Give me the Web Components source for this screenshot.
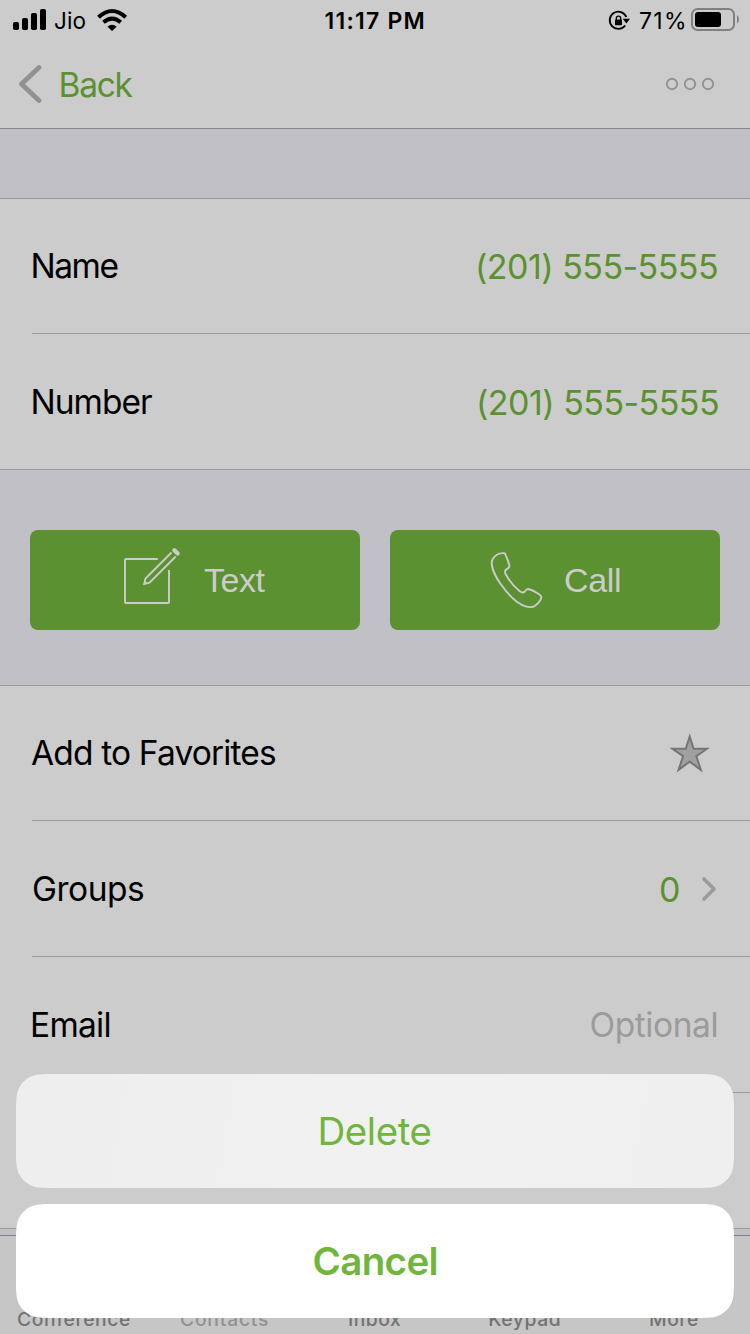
<!DOCTYPE html>
<html lang="en">
<head>
<meta charset="utf-8">
<title>Contact</title>
<style>
html,body{margin:0;padding:0;background:#ccc}
body{font-family:Inter,"Liberation Sans",sans-serif;color:#000;width:750px;height:1334px;overflow:hidden}
</style>
</head>
<body>
<contact-screen></contact-screen>
<script>
const define=(name,html,setup)=>customElements.define(name,class extends HTMLElement{
  constructor(){super();this.attachShadow({mode:'open'}).innerHTML=html;}
  connectedCallback(){if(setup)setup(this,this.shadowRoot);}
});
const ctx=document.createElement('canvas').getContext('2d');

// Text whose box is as wide as its visible glyphs; tracking is spread to reach the width.
define('fit-text','<style>:host{display:block;flex:none;white-space:nowrap;line-height:1.2}span{display:block}</style><span><slot></slot></span>',(el,root)=>{
  const size=+el.getAttribute('size'),w=+el.getAttribute('w'),weight=el.getAttribute('weight')||400;
  const family=el.getAttribute('family')||'Inter',t=el.textContent;
  ctx.font=`${weight} ${size}px "${family}"`;
  const m=ctx.measureText(t),ink=m.actualBoundingBoxLeft+m.actualBoundingBoxRight;
  const ls=t.length>1?(w-ink)/(t.length-1):0;
  el.style.cssText+=`;width:${w}px;font:${weight} ${size}px/1.2 "${family}",sans-serif;color:${el.getAttribute('color')||'inherit'}`;
  const s=root.querySelector('span');
  s.style.letterSpacing=ls+'px';s.style.marginLeft=m.actualBoundingBoxLeft+'px';
});

define('status-bar',`<style>
:host{display:flex;height:41px;align-items:center;justify-content:space-between}
div{display:flex;align-items:center}svg{display:block;flex:none}
.l{padding-left:13px;width:325px;box-sizing:border-box}.r{width:326px;justify-content:flex-end;padding-right:10px;box-sizing:border-box}
</style>
<div class="l"><svg width="33" height="41"><rect x="0" y="22" width="6" height="8" rx="1.8"/><rect x="9" y="18" width="6" height="12" rx="1.8"/><rect x="18" y="13" width="6" height="17" rx="1.8"/><rect x="27" y="9" width="6" height="21" rx="1.8"/></svg>
<fit-text size="22.5" w="30.5" style="margin-left:9px">Jio</fit-text>
<svg width="32" height="41" style="margin-left:10px" viewBox="95.500 0 32 41"><g fill="none" stroke="#000" stroke-width="4"><path d="M98 17.2Q111.6 4.8 125.200 17.2"/><path d="M103 22.300Q111.600 14.800 120.200 22.300"/></g><path d="M107 26.700Q111.600 22.600 116.200 26.700L111.600 31z"/></svg></div>
<fit-text size="23" w="98" weight="600" style="margin-top:2px">11:17 PM</fit-text>
<div class="r"><svg width="22" height="41" viewBox="608 0 22 41"><path d="M626.300 17A8.600 8.600 0 1 0 625.200 25.500" fill="none" stroke="#000" stroke-width="1.900"/><path d="M622.800 18.800h7.200l-3.600 4.700z"/><rect x="615" y="19.600" width="7" height="5.700" rx=".8"/><path d="M616.300 20v-1.600a2.200 2.200 0 0 1 4.400 0V20" fill="none" stroke="#000" stroke-width="1.300"/></svg>
<fit-text size="23" w="44" style="margin-left:10px;margin-right:1px;margin-top:2px">71%</fit-text>
<svg width="49" height="41" style="margin-left:6px" viewBox="691 0 49 41"><rect x="692" y="9" width="42" height="21" rx="5.500" fill="none" stroke="#808080" stroke-width="2"/><rect x="695" y="12" width="26" height="15" rx="3"/><path d="M737 15v8.500q1.900-1 1.900-4.250t-1.900-4.250z" fill="#808080"/></svg></div>`);

define('nav-bar',`<style>
:host{display:flex;height:87px;align-items:center;border-bottom:1px solid #87868b;padding-left:18px;padding-right:35px}
svg{display:block;margin-bottom:2px}.sp{flex:1}</style>
<svg width="24" height="40" viewBox="0 0 24 40"><path d="M21 3.500L3.500 20 21 36.500" fill="none" stroke="#919191" stroke-width="4.800" stroke-linecap="round" stroke-linejoin="round"/></svg>
<fit-text size="33.500" w="72" color="#5b9130" style="margin-left:18.500px;margin-top:1px">Back</fit-text><div class="sp"></div>
<svg width="50" height="14" viewBox="0 0 50 14"><g fill="none" stroke="#919191" stroke-width="1.900"><circle cx="7" cy="7" r="5.200"/><circle cx="25" cy="7" r="5.200"/><circle cx="43" cy="7" r="5.200"/></g></svg>`);

define('list-row',`<style>
:host{display:block;height:136px;padding-left:32px}
:host([first]),:host([last]){height:135px}
.row{display:flex;align-items:center;justify-content:space-between;height:100%;box-sizing:border-box}
:host(:not([first])) .row{padding-top:2px}
.end{display:flex;align-items:center;padding-right:32px}
:host(:not([last])) .row{border-bottom:1px solid #9b9b9d}
</style><div class="row"><slot></slot><div class="end"><slot name="value"></slot></div></div>`);

define('list-group',`<style>:host{display:block;border-top:1px solid #9b9b9d;border-bottom:1px solid #9b9b9d;background:#ccc}</style><slot></slot>`);

define('action-button',`<style>:host{display:flex;align-items:center;box-sizing:border-box;width:330px;height:100px;border-radius:8px;background:#5b9130;color:#ccc}</style><slot></slot>`);

define('edit-icon',`<style>:host,svg{display:block}</style><svg width="58" height="60" viewBox="123 546 58 60" fill="none" stroke="#ccc" stroke-width="1.900"><path d="M157.800 559H126Q125 559 125 560V602Q125 603 126 603H168Q169 603 169 602V570"/><path d="M171.500 552.500L145.500 578.500L144.200 584L149.500 582.700L175.700 556.500"/><path d="M144 584.500l.8-3.800 3 3z" fill="#ccc" stroke="none"/><path d="M174.300 550.200L177.700 553.600" stroke-width="4.200" stroke-linecap="round"/></svg>`);
define('phone-icon',`<style>:host,svg{display:block}</style><svg width="56" height="60" viewBox="489 550 56 60" fill="none" stroke="#ccc" stroke-width="1.900" stroke-linejoin="round"><path d="M504.500 553.200Q497 552.500 492.700 559C490.300 563 492.400 572 500 583C509 596 518 604.500 526.500 606.700C531 607.900 534.500 607 537.800 603.300C540.500 600.500 541.300 598.800 541.300 597.200C541.300 595.800 539.500 594.600 537.500 593.300C534 591 530 589.400 528.300 589C526.500 588.800 526 590.300 524.800 591.500C523.500 592.800 521.500 592.600 519.500 591C514 586.700 508.300 579 505.600 574C504.400 571.600 505.100 570.200 506.700 569.100C508.500 568.100 509.800 567.700 509.300 565.500C508.600 562 506.800 557.500 505.700 555.100Q505.100 553.600 504.500 553.200Z"/></svg>`);
define('star-icon',`<style>:host{display:block;margin-right:8px}svg{display:block}</style><svg width="40" height="40" viewBox="0 0 40 40"><path d="M19.700 3.600L23.600 15.700H37L26.300 23.100L30.800 36.800L19.700 28.600L8.600 36.800L13.100 23.100L2.400 15.700H15.800Z" fill="#a0a0a0" stroke="#757575" stroke-width="2"/></svg>`);
define('chevron-icon',`<style>:host{display:block;margin-left:22px;margin-right:1px}svg{display:block}</style><svg width="16" height="26" viewBox="0 0 16 26"><path d="M3 3L13 13L3 23" fill="none" stroke="#9b9b9b" stroke-width="3.700" stroke-linecap="round" stroke-linejoin="round"/></svg>`);

// Sheet button with continuous-curvature corners.
define('sheet-button',`<style>:host{display:flex;align-items:center;justify-content:center;height:114px;color:#70b63c;background:#fff}:host([translucent]){background:linear-gradient(100deg,#eee 0,#efefef 22%,#f1f1f1 50%,#f0f0f0 75%,#efefef)}</style><slot></slot>`,el=>{
  const r=26,w=718,h=114,a=1.528665*r,b=1.088493*r,c=.868407*r,d=.631494*r,e=.074911*r,f=.372824*r,g=.16906*r;
  el.style.clipPath=`path("M${a} 0H${w-a}C${w-b} 0 ${w-c} 0 ${w-d} ${e}C${w-f} ${g} ${w-g} ${f} ${w-e} ${d}C${w} ${c} ${w} ${b} ${w} ${a}V${h-a}C${w} ${h-b} ${w} ${h-c} ${w-e} ${h-d}C${w-g} ${h-f} ${w-f} ${h-g} ${w-d} ${h-e}C${w-c} ${h} ${w-b} ${h} ${w-a} ${h}H${a}C${b} ${h} ${c} ${h} ${d} ${h-e}C${f} ${h-g} ${g} ${h-f} ${e} ${h-d}C0 ${h-c} 0 ${h-b} 0 ${h-a}V${a}C0 ${b} 0 ${c} ${e} ${d}C${g} ${f} ${f} ${g} ${d} ${e}C${c} 0 ${b} 0 ${a} 0Z")`;
});
define('action-sheet',`<style>:host{position:absolute;left:16px;right:16px;bottom:16px;display:flex;flex-direction:column;gap:16px}</style><slot></slot>`);

define('tab-bar',`<style>:host{display:grid;grid-template-columns:repeat(5,150px);justify-items:center;align-items:end;box-sizing:border-box;height:99px;border-top:1px solid #808085;background:#c6c6c6;color:#737373;padding-bottom:3px}</style>
<fit-text size="19.300" w="112" weight="500" style="margin-right:2px">Conference</fit-text><fit-text size="19.300" w="87" weight="500" color="#929292" style="margin-right:1px">Contacts</fit-text><fit-text size="19.300" w="52" weight="500">Inbox</fit-text><fit-text size="19.300" w="70.500" weight="500" style="margin-right:1px">Keypad</fit-text><fit-text size="19.300" w="48" weight="500" style="margin-right:2px">More</fit-text>`);

define('contact-screen',`<style>
:host{display:flex;flex-direction:column;position:relative;width:750px;height:1334px;background:#c1c0c6;overflow:hidden}
status-bar,nav-bar{background:#ccc}nav-bar{flex:none}
.gap{height:69px}.actions{display:flex;gap:30px;padding:60px 30px 55px}.foot{height:6px}
</style>
<status-bar></status-bar><nav-bar></nav-bar><div class="gap"></div>
<list-group>
<list-row first><fit-text size="33.500" w="85" style="margin-left:.5px">Name</fit-text><fit-text slot="value" size="34" w="239" color="#5b9130" style="margin-top:2px;margin-right:1px">(201) 555-5555</fit-text></list-row>
<list-row last><fit-text size="33.500" w="119.500" style="margin-left:.5px">Number</fit-text><fit-text slot="value" size="34" w="239" color="#5b9130" style="margin-top:2px">(201) 555-5555</fit-text></list-row>
</list-group>
<div class="actions">
<action-button><edit-icon style="margin-left:93px;margin-top:-8px"></edit-icon><fit-text family="Liberation Sans" size="34" w="61.500" style="margin-left:23px">Text</fit-text></action-button>
<action-button><phone-icon style="margin-left:99px"></phone-icon><fit-text family="Liberation Sans" size="34" w="55" style="margin-left:20px">Call</fit-text></action-button>
</div>
<list-group>
<list-row first><fit-text size="33.500" w="244" style="margin-left:-1px">Add to Favorites</fit-text><star-icon slot="value"></star-icon></list-row>
<list-row><fit-text size="33.500" w="110" style="margin-left:1px">Groups</fit-text><fit-text slot="value" size="34" w="18" color="#5b9130" style="margin-top:1px">0</fit-text><chevron-icon slot="value"></chevron-icon></list-row>
<list-row><fit-text size="33.500" w="77.500">Email</fit-text><fit-text slot="value" size="33.500" w="126" color="#9b9b9b" style="margin-right:1.500px">Optional</fit-text></list-row>
<list-row last></list-row>
</list-group>
<div class="foot"></div><tab-bar></tab-bar>
<action-sheet><sheet-button translucent><fit-text size="38.500" w="110" style="margin-left:1px">Delete</fit-text></sheet-button><sheet-button><fit-text size="38.500" w="123" weight="600">Cancel</fit-text></sheet-button></action-sheet>`);
</script>
</body>
</html>
